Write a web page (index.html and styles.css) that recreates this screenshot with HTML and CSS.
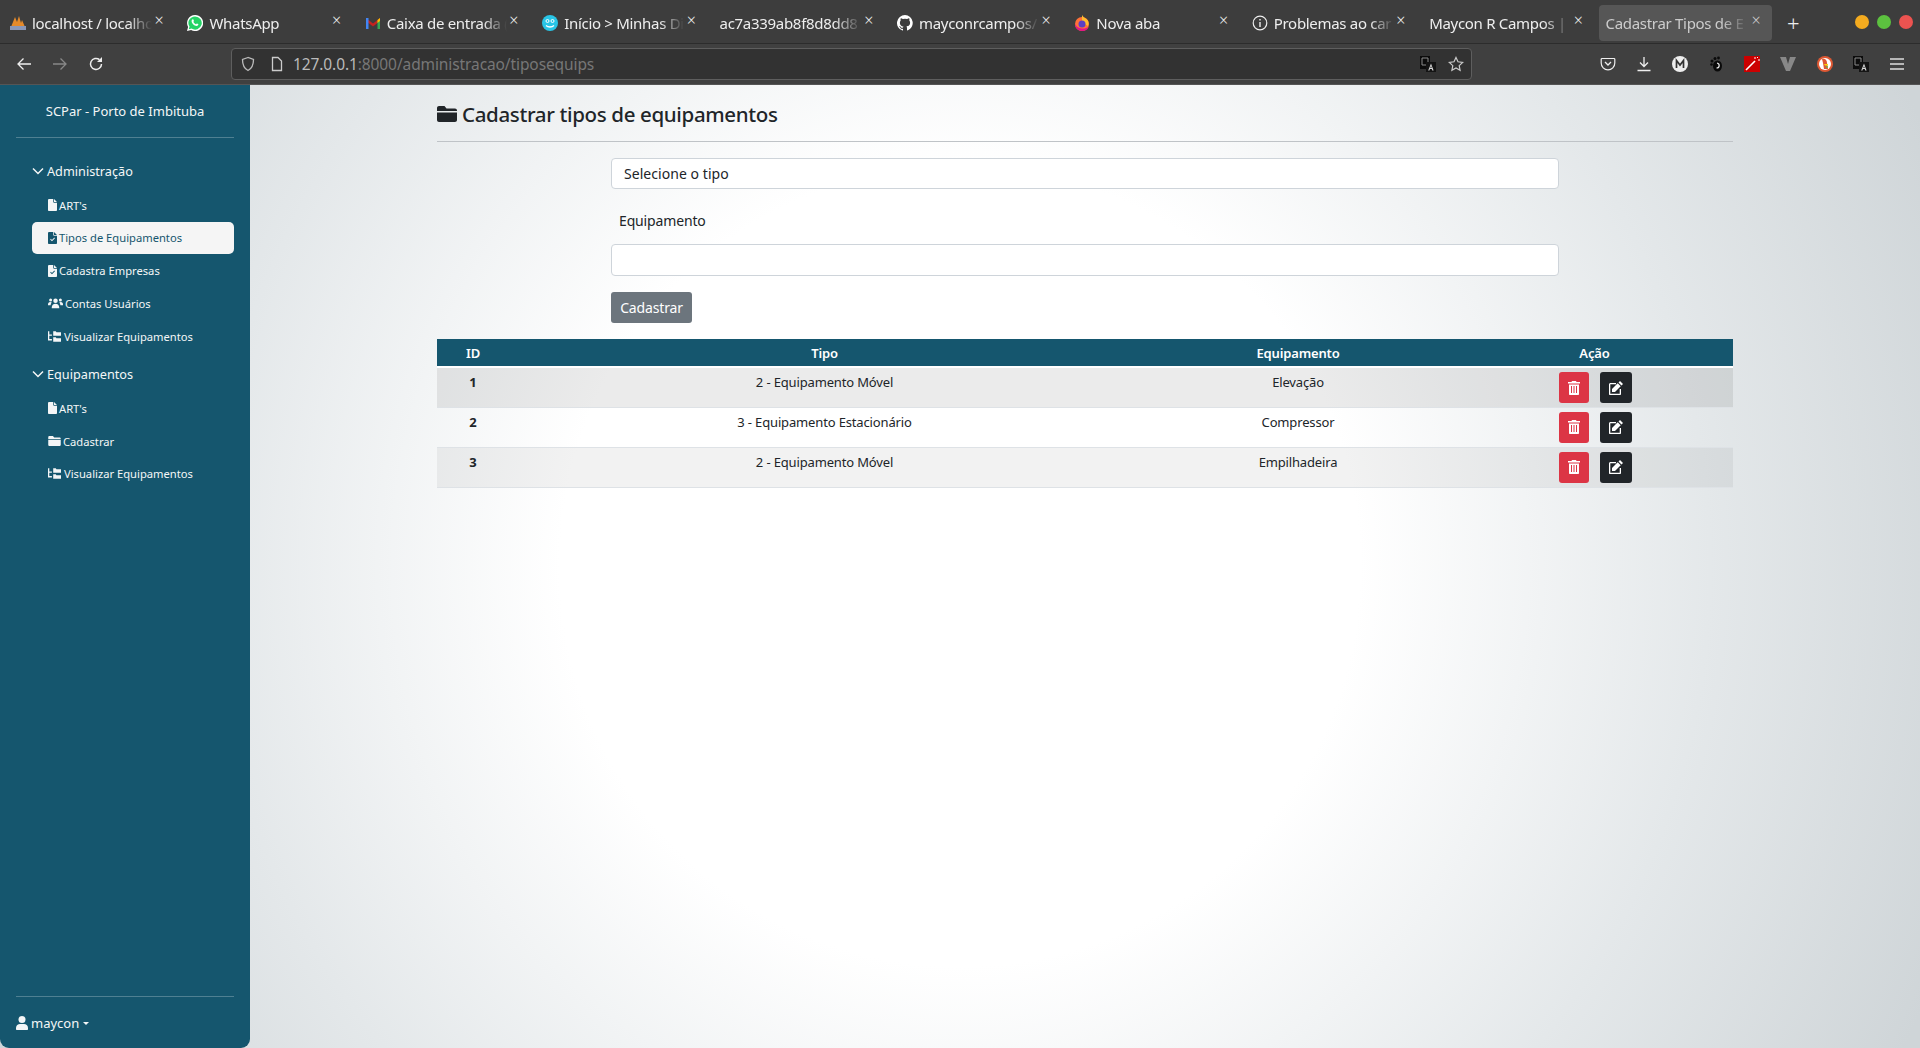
FILE: index.html
```html
<!DOCTYPE html>
<html lang="pt-BR">
<head>
	<meta charset="UTF-8">
	<meta name="viewport" content="width=device-width, initial-scale=1.0">
	<title>Cadastrar Tipos de Equipamentos</title>
	<link rel="stylesheet" href="styles.css">
</head>
<body>
	<svg class="sprite" aria-hidden="true">
		<symbol id="i-file" viewBox="0 0 12 16"><path d="M0 1.500C0 .7.7 0 1.500 0H7v4c0 .6.400 1 1 1h4v9.500c0 .8-.7 1.500-1.500 1.500h-9C.7 16 0 15.300 0 14.500zM8 0l4 4H8z"/></symbol>
		<symbol id="i-file-check" viewBox="0 0 12 16"><path fill-rule="evenodd" d="M0 1.500C0 .7.7 0 1.500 0H7v4c0 .6.400 1 1 1h4v9.500c0 .8-.7 1.500-1.500 1.500h-9C.7 16 0 15.300 0 14.500zM8 0l4 4H8zM9.300 8.300 8.400 7.400 5.300 10.600 3.800 9.100l-.9.9 2.400 2.400z"/></symbol>
		<symbol id="i-folder" viewBox="0 0 20 16"><path d="M2 0h5.500l2 2.500H18c1.100 0 2 .9 2 2V5H0V2C0 .9.900 0 2 0zM0 6.500h20V14c0 1.100-.9 2-2 2H2c-1.100 0-2-.9-2-2z"/></symbol>
		<symbol id="i-users" viewBox="0 0 20 16"><circle cx="10" cy="5" r="3"/><circle cx="3.500" cy="4" r="2"/><circle cx="16.500" cy="4" r="2"/><path d="M5 14c0-3 2-5 5-5s5 2 5 5v1H5zM0 10c0-2 1-3.500 3-3.500 1 0 1.500.3 2 .8C4 8.300 3.500 9.500 3.500 11H0zM20 10c0-2-1-3.500-3-3.500-1 0-1.500.3-2 .8 1 1 1.500 2.200 1.500 3.700H20z"/></symbol>
		<symbol id="i-tree" viewBox="0 0 20 16"><path d="M0 0h2v5h4v2H2v5h4v2H0z"/><path d="M8 0h4l1 1.500h7V7H8zM8 9h4l1 1.500h7V16H8z"/></symbol>
		<symbol id="i-chevron" viewBox="0 0 12 8"><path d="M1 1.500l5 5 5-5" fill="none" stroke="currentColor" stroke-width="1.500"/></symbol>
		<symbol id="i-user" viewBox="0 0 12 14"><circle cx="6" cy="3.500" r="3.500"/><path d="M0 12c0-2.500 2-4 4-4h4c2 0 4 1.500 4 4v1c0 .6-.4 1-1 1H1c-.6 0-1-.4-1-1z"/></symbol>
		<symbol id="i-trash" viewBox="0 0 12 14"><path fill-rule="evenodd" d="M4 0h4l.5 1H12v1.500H0V1h3.500zM1 3.500h10V13c0 .6-.4 1-1 1H2c-.6 0-1-.4-1-1zM3 5v7h1V5zm2.500 0v7h1V5zM8 5v7h1V5z"/></symbol>
		<symbol id="i-edit" viewBox="0 0 14 14"><path d="M11 0l3 3-1.500 1.500-3-3zM8.700 2.300l3 3L6 11H3V8z"/><path d="M1.500 2H7v1.300H1.300v9.400h9.400V8H12v5c0 .6-.5 1-1 1H1c-.6 0-1-.4-1-1V3.500C0 2.700.7 2 1.500 2z"/></symbol>
		<symbol id="i-translate" viewBox="0 0 16 16"><path fill="#0c0c0c" d="M0 0h10v13H0z"/><path d="M2 2h6v7H2z" fill="none" stroke="#8a8a8a"/><path fill="#141414" d="M6 6h10v10H6z"/><path fill="#d8d8d8" d="M11 7.500l2.600 7h-1.300l-.5-1.500H9.900l-.5 1.500H8.200zm0 2.600-.7 2h1.400z"/></symbol>
	</svg>

	<div class="browser-tabs">
		<div class="tab">
			<svg class="favicon" viewBox="0 0 16 16"><path fill="#e58a2b" d="M1 12 5 2l2 5 2-6 2 7 1-3 3 7z"/><path fill="#8a97b8" d="M0 11h16v4H0z"/></svg>
			<span class="tab-label">localhost / localho</span><span class="tab-close">×</span>
		</div>
		<div class="tab">
			<svg class="favicon" viewBox="0 0 16 16"><path fill="#fff" d="M8 0a8 8 0 0 0-6.900 12L0 16l4.100-1.100A8 8 0 1 0 8 0z"/><path fill="#25d366" d="M8 1.400a6.600 6.600 0 0 0-5.500 10.200l-.7 2.600 2.700-.7A6.600 6.600 0 1 0 8 1.400z"/><path fill="#fff" d="M5.800 4.300c.5 0 .6.200 1.100 1.500.1.400-.5 1-.5 1.200.5 1 1.300 1.700 2.400 2.200.3 0 .7-.8 1-.8l1.500.7c.2.900-.5 1.800-1.700 1.800-2.500-.2-5-2.800-5-4.700 0-1 .6-1.900 1.200-1.900z"/></svg>
			<span class="tab-label">WhatsApp</span><span class="tab-close">×</span>
		</div>
		<div class="tab">
			<svg class="favicon" viewBox="0 0 16 16"><path fill="#c5221f" d="M1 3l7 5.500L15 3v3L8 11.500 1 6z"/><path fill="#4285f4" d="M1 3h2.500v11H1z"/><path fill="#34a853" d="M12.500 6H15v8h-2.500z"/><path fill="#fbbc04" d="M12.500 5 15 3v3l-2.500 2z"/></svg>
			<span class="tab-label">Caixa de entrada (</span><span class="tab-close">×</span>
		</div>
		<div class="tab">
			<svg class="favicon" viewBox="0 0 16 16"><circle cx="8" cy="8" r="8" fill="#29c5e6"/><circle cx="5.500" cy="6" r="1.500" fill="none" stroke="#fff"/><circle cx="10.500" cy="6" r="1.500" fill="none" stroke="#fff"/><path d="M4 10.500c2 2 6 2 8 0" fill="none" stroke="#fff" stroke-width="1.300"/></svg>
			<span class="tab-label">Início &gt; Minhas Di</span><span class="tab-close">×</span>
		</div>
		<div class="tab">
			<span class="tab-label">ac7a339ab8f8d8dd8</span><span class="tab-close">×</span>
		</div>
		<div class="tab">
			<svg class="favicon" viewBox="0 0 16 16"><path fill="#fff" d="M8 0a8 8 0 0 0-2.500 15.600c.4.100.5-.2.500-.4v-1.400c-2.200.5-2.700-1-2.700-1-.4-.9-.9-1.200-.9-1.200-.7-.5.100-.5.100-.5.800.1 1.200.8 1.200.8.700 1.200 1.900.9 2.300.7.100-.5.300-.9.500-1.100-1.800-.2-3.600-.9-3.600-4 0-.9.300-1.600.8-2.100-.1-.2-.4-1 .1-2.100 0 0 .7-.2 2.200.8a7.500 7.500 0 0 1 4 0c1.500-1 2.200-.8 2.200-.8.400 1.100.2 1.900.1 2.100.5.600.8 1.300.8 2.100 0 3.100-1.900 3.700-3.700 3.900.3.300.6.800.6 1.500v2.200c0 .2.100.5.500.4A8 8 0 0 0 8 0z"/></svg>
			<span class="tab-label">mayconrcampos/</span><span class="tab-close">×</span>
		</div>
		<div class="tab">
			<svg class="favicon" viewBox="0 0 16 16"><circle cx="8" cy="9" r="7" fill="#ff7139"/><path fill="#ffbd2e" d="M8 0c1 2 3 3 4.500 4C15 6 15 9 14 11L8 7z"/><circle cx="8" cy="9" r="3.500" fill="#5b3fc4"/><path fill="#e31587" d="M1 9c0 4 3 7 7 7s6-2 6.500-4C12 14 4 15 1 9z"/></svg>
			<span class="tab-label">Nova aba</span><span class="tab-close">×</span>
		</div>
		<div class="tab">
			<svg class="favicon" viewBox="0 0 16 16"><circle cx="8" cy="8" r="6.800" fill="none" stroke="#eee" stroke-width="1.200"/><path fill="#eee" d="M7.300 7h1.400v5H7.300zM7.300 4h1.400v1.500H7.300z"/></svg>
			<span class="tab-label">Problemas ao car</span><span class="tab-close">×</span>
		</div>
		<div class="tab">
			<span class="tab-label">Maycon R Campos | D</span><span class="tab-close">×</span>
		</div>
		<div class="tab tab-active">
			<span class="tab-label">Cadastrar Tipos de E</span><span class="tab-close">×</span>
		</div>
		<div class="tab-new">+</div>
		<div class="window-controls">
			<span class="dot dot-min"></span>
			<span class="dot dot-max"></span>
			<span class="dot dot-close"></span>
		</div>
	</div>

	<div class="browser-toolbar">
		<div class="nav-buttons">
			<svg class="tool-icon" viewBox="0 0 16 16"><path d="M15 8H2M7.500 2.500 2 8l5.500 5.500" fill="none" stroke="#eee" stroke-width="1.300"/></svg>
			<svg class="tool-icon" viewBox="0 0 16 16"><path d="M1 8h13M8.500 2.500 14 8l-5.500 5.500" fill="none" stroke="#888" stroke-width="1.300"/></svg>
			<svg class="tool-icon" viewBox="0 0 16 16"><path d="M13.500 8A5.500 5.500 0 1 1 11.500 3.700" fill="none" stroke="#eee" stroke-width="1.500"/><path fill="#eee" d="M14 1v5H9z"/></svg>
		</div>
		<div class="urlbar">
			<svg class="url-icon" viewBox="0 0 16 16"><path d="M8 1.500 2.500 3.500c0 5 1.500 9 5.500 11 4-2 5.500-6 5.500-11z" fill="none" stroke="#bbb" stroke-width="1.300"/></svg>
			<svg class="url-icon" viewBox="0 0 16 16"><path d="M3.500 1.500H9L12.500 5v9.500h-9z" fill="none" stroke="#ccc" stroke-width="1.300"/></svg>
			<span class="url-text">127.0.0.1<span class="url-dim">:8000/administracao/tiposequips</span></span>
			<svg class="url-icon url-translate"><use href="#i-translate"/></svg>
			<svg class="url-icon" viewBox="0 0 16 16"><path d="M8 1.500l2 4.300 4.700.6-3.500 3.200.9 4.700L8 12l-4.100 2.300.9-4.700L1.300 6.400 6 5.800z" fill="none" stroke="#ccc" stroke-width="1.200"/></svg>
		</div>
		<div class="toolbar-icons">
			<svg class="tool-icon" viewBox="0 0 16 16"><path d="M2 2.500h12c.5 0 .8.300.8.800V7A6.800 6.800 0 0 1 1.200 7V3.300c0-.5.300-.8.800-.8z" fill="none" stroke="#eee" stroke-width="1.200"/><path d="M5 6l3 3 3-3" fill="none" stroke="#eee" stroke-width="1.300"/></svg>
			<svg class="tool-icon" viewBox="0 0 16 16"><path d="M8 1v9M4 6.500 8 10.500l4-4M1.500 14.500h13" fill="none" stroke="#eee" stroke-width="1.300"/></svg>
			<svg class="tool-icon" viewBox="0 0 16 16"><circle cx="8" cy="8" r="8" fill="#eee"/><path d="M4.500 12V4.500L8 9l3.500-4.500V12" fill="none" stroke="#333" stroke-width="1.700"/></svg>
			<svg class="tool-icon" viewBox="0 0 16 16"><ellipse cx="9.500" cy="10" rx="4.500" ry="5.500" fill="#0a0a0a"/><circle cx="4" cy="5" r="1.500" fill="#0a0a0a"/><circle cx="7" cy="2.500" r="1.500" fill="#0a0a0a"/><circle cx="10.500" cy="2" r="1.400" fill="#0a0a0a"/><circle cx="3.500" cy="8.500" r="1.300" fill="#0a0a0a"/><path d="M9 7c3 .5 3 5-.5 5" fill="none" stroke="#eee" stroke-width="1.200"/></svg>
			<svg class="tool-icon" viewBox="0 0 16 16"><path fill="#c00" d="M0 0h16v16H0z"/><path d="M2 14 11 5" stroke="#fff" stroke-width="1.600"/><path d="M11 1v2M14 4h2M13 2l1-1" stroke="#fff"/></svg>
			<svg class="tool-icon" viewBox="0 0 16 16"><path fill="#888" d="M0 1h6l2 7 2-7h6L10 15H6z"/></svg>
			<svg class="tool-icon" viewBox="0 0 16 16"><circle cx="8" cy="8" r="8" fill="#de5833"/><circle cx="8" cy="8" r="6" fill="#fff"/><path fill="#de5833" d="M5 3c3-1 5 1 5 4l1 6H7L6 7z"/><path fill="#65bc46" d="M8 11l3-1v2z"/><path fill="#fdd20a" d="M7 8h4v1.500H8z"/></svg>
			<svg class="tool-icon"><use href="#i-translate"/></svg>
			<svg class="tool-icon" viewBox="0 0 16 16"><path d="M1 3h14M1 8h14M1 13h14" stroke="#ddd" stroke-width="1.300"/></svg>
		</div>
	</div>

	<div class="app">
		<aside class="sidebar">
			<div class="brand">SCPar - Porto de Imbituba</div>
			<hr class="side-rule">

			<div class="nav-group">
				<div class="group-title"><svg class="chevron"><use href="#i-chevron"/></svg>Administração</div>
				<a class="nav-item"><svg class="ico ico-file"><use href="#i-file"/></svg>ART's</a>
				<a class="nav-item active"><svg class="ico ico-file"><use href="#i-file-check"/></svg>Tipos de Equipamentos</a>
				<a class="nav-item"><svg class="ico ico-file"><use href="#i-file-check"/></svg>Cadastra Empresas</a>
				<a class="nav-item"><svg class="ico ico-users"><use href="#i-users"/></svg>Contas Usuários</a>
				<a class="nav-item"><svg class="ico ico-wide"><use href="#i-tree"/></svg>Visualizar Equipamentos</a>
			</div>

			<div class="nav-group">
				<div class="group-title"><svg class="chevron"><use href="#i-chevron"/></svg>Equipamentos</div>
				<a class="nav-item"><svg class="ico ico-file"><use href="#i-file"/></svg>ART's</a>
				<a class="nav-item"><svg class="ico ico-folder"><use href="#i-folder"/></svg>Cadastrar</a>
				<a class="nav-item"><svg class="ico ico-wide"><use href="#i-tree"/></svg>Visualizar Equipamentos</a>
			</div>

			<div class="side-footer">
				<hr class="side-rule">
				<div class="user"><svg class="ico-user"><use href="#i-user"/></svg>maycon<span class="caret"></span></div>
			</div>
		</aside>

		<main class="content">
			<h1 class="page-title"><svg class="title-icon"><use href="#i-folder"/></svg>Cadastrar tipos de equipamentos</h1>

			<form class="type-form">
				<select class="field field-select">
					<option>Selecione o tipo</option>
				</select>
				<label class="field-label" for="equipamento">Equipamento</label>
				<input class="field field-input" id="equipamento" type="text">
				<button class="btn-submit" type="button">Cadastrar</button>
			</form>

			<table class="types-table">
				<thead>
					<tr>
						<th class="col-id">ID</th>
						<th class="col-type">Tipo</th>
						<th class="col-equip">Equipamento</th>
						<th class="col-action">Ação</th>
					</tr>
				</thead>
				<tbody>
					<tr>
						<td class="cell-id">1</td>
						<td>2 - Equipamento Móvel</td>
						<td>Elevação</td>
						<td><div class="actions"><button class="btn-action btn-delete" type="button"><svg class="btn-ico"><use href="#i-trash"/></svg></button><button class="btn-action btn-edit" type="button"><svg class="btn-ico"><use href="#i-edit"/></svg></button></div></td>
					</tr>
					<tr>
						<td class="cell-id">2</td>
						<td>3 - Equipamento Estacionário</td>
						<td>Compressor</td>
						<td><div class="actions"><button class="btn-action btn-delete" type="button"><svg class="btn-ico"><use href="#i-trash"/></svg></button><button class="btn-action btn-edit" type="button"><svg class="btn-ico"><use href="#i-edit"/></svg></button></div></td>
					</tr>
					<tr>
						<td class="cell-id">3</td>
						<td>2 - Equipamento Móvel</td>
						<td>Empilhadeira</td>
						<td><div class="actions"><button class="btn-action btn-delete" type="button"><svg class="btn-ico"><use href="#i-trash"/></svg></button><button class="btn-action btn-edit" type="button"><svg class="btn-ico"><use href="#i-edit"/></svg></button></div></td>
					</tr>
				</tbody>
			</table>
		</main>
	</div>
</body>
</html>
```

FILE: styles.css
```css
* {
	box-sizing: border-box;
}
html, body {
	height: 100%;
}
body {
	margin: 0;
	display: flex;
	flex-direction: column;
	overflow: hidden;
	font-family: "Noto Sans", sans-serif;
	color: #212529;
	background-color: #3f3f3f;
}
.sprite {
	display: none;
}

/* browser chrome */
.browser-tabs {
	display: flex;
	align-items: center;
	height: 44px;
	padding-top: 2px;
	background-color: #3d3d3d;
	border-bottom: 1px solid #2c2c2c;
	color: #eee;
	font-size: 15px;
	letter-spacing: -0.3px;
}
.tab {
	display: flex;
	align-items: center;
	flex: 0 0 177.4px;
	min-width: 0;
	height: 36px;
	padding: 0 11.4px 0 10px;
}
.tab-active {
	margin: 0 2px 0 2px;
	flex-basis: 173px;
	padding: 0 8.600px 0 7px;
	background-color: #565656;
	border-radius: 4px;
	color: #ccc;
}
.favicon {
	flex: none;
	width: 16px;
	height: 16px;
	margin-right: 6px;
}
.tab-label {
	flex: 1;
	min-width: 0;
	overflow: hidden;
	white-space: nowrap;
	-webkit-mask-image: linear-gradient(to right, #000 80%, transparent 100%);
	mask-image: linear-gradient(to right, #000 80%, transparent 100%);
}
.tab-close {
	flex: none;
	width: 14px;
	text-align: center;
	font-size: 16px;
	font-weight: 300;
	line-height: 16px;
	margin-top: -6px;
}
.tab-new {
	margin-left: 9.500px;
	font-size: 22px;
	font-weight: 300;
	line-height: 22px;
	width: 20px;
	text-align: center;
}
.window-controls {
	display: flex;
	gap: 8px;
	margin-left: auto;
	margin-right: 7px;
	margin-top: -2px;
}
.dot {
	width: 14px;
	height: 14px;
	border-radius: 50%;
}
.dot-min {
	background-color: #f4ab1f;
}
.dot-max {
	background-color: #5cc13f;
}
.dot-close {
	background-color: #ec5350;
}
.browser-toolbar {
	display: flex;
	align-items: center;
	height: 41px;
	background-color: #404040;
	border-bottom: 1px solid #555;
}
.nav-buttons {
	display: flex;
	gap: 20px;
	padding-left: 16px;
	width: 231px;
}
.tool-icon {
	flex: none;
	width: 16px;
	height: 16px;
}
.urlbar {
	display: flex;
	align-items: center;
	width: 1241px;
	height: 32px;
	padding: 0 7px 0 8px;
	background-color: #323232;
	border: 1px solid #5e5e5e;
	border-radius: 4px;
	font-size: 15.500px;
	letter-spacing: -0.1px;
}
.url-icon {
	flex: none;
	width: 16px;
	height: 16px;
	margin-right: 13px;
}
.url-text {
	flex: 1;
	margin-left: -5px;
	color: #bbb;
}
.url-dim {
	color: #777;
}
.url-translate {
	margin-right: 12px;
}
.urlbar .url-icon:last-child {
	margin-right: 0;
}
.toolbar-icons {
	display: flex;
	gap: 20.100px;
	padding-left: 128px;
}

/* app */
.app {
	flex: 1;
	display: flex;
	min-height: 0;
	background: radial-gradient(circle at 50% 50%, #fff 400px, #e4e8ea 750px, #cfd5d8 1060px);
}
.sidebar {
	display: flex;
	flex-direction: column;
	flex: 0 0 250px;
	padding: 0 16px;
	background-color: #15566e;
	border-radius: 0 0 9px 9px;
	color: #f4f6f7;
}
.brand {
	height: 52px;
	line-height: 52px;
	text-align: center;
	font-size: 13px;
}
.side-rule {
	margin: 0;
	border: 0;
	border-top: 1px solid rgba(255, 255, 255, 0.25);
}
.nav-group {
	margin-top: 21px;
	margin-bottom: -11.500px;
}
.group-title {
	display: flex;
	align-items: center;
	height: 24px;
	margin-bottom: 6px;
	padding-left: 16px;
	font-size: 12.700px;
}
.chevron {
	width: 12px;
	height: 8px;
	margin-right: 3px;
}
.nav-item {
	display: flex;
	align-items: center;
	height: 32px;
	margin-bottom: 0.750px;
	margin-left: 16px;
	padding-left: 16px;
	border-radius: 5px;
	font-size: 11.200px;
}
.nav-item.active {
	background-color: #f5f5f5;
	color: #15566e;
}
.ico {
	flex: none;
	fill: currentColor;
	margin-right: 2px;
}
.ico-file {
	width: 9px;
	height: 12px;
}
.ico-wide {
	width: 13px;
	height: 11px;
	margin-right: 3px;
}
.ico-users {
	width: 15px;
	height: 12px;
}
.ico-folder {
	width: 13px;
	height: 10px;
}
.side-footer {
	margin-top: auto;
	padding-bottom: 13px;
}
.user {
	display: flex;
	align-items: center;
	height: 24px;
	margin-top: 14px;
	font-size: 13px;
}
.ico-user {
	width: 12px;
	height: 14px;
	margin-right: 3px;
	fill: currentColor;
}
.caret {
	margin-left: 4px;
	border-top: 3px solid currentColor;
	border-left: 3px solid transparent;
	border-right: 3px solid transparent;
}

/* main area */
.content {
	flex: 1;
	min-width: 0;
	padding: 0 187px;
}
.page-title {
	display: flex;
	align-items: center;
	height: 57px;
	margin: 0;
	padding-top: 2px;
	border-bottom: 1px solid #bfc3c7;
	font-size: 20.500px;
	font-weight: 500;
	letter-spacing: -0.35px;
}
.title-icon {
	width: 20px;
	height: 16px;
	margin-right: 5px;
	fill: currentColor;
}
.type-form {
	width: 948px;
	margin: 16px auto 16px auto;
	font-size: 14px;
	letter-spacing: -0.15px;
}
.field {
	display: block;
	width: 100%;
	background-color: #fff;
	border: 1px solid #ced4da;
	border-radius: 4px;
	font: inherit;
	letter-spacing: inherit;
	color: #212529;
}
.field-select {
	height: 31px;
	padding-left: 12px;
	appearance: none;
	letter-spacing: 0.05px;
}
.field-label {
	display: block;
	height: 55px;
	line-height: 64px;
	padding-left: 8px;
}
.field-input {
	height: 32px;
}
.btn-submit {
	display: block;
	width: 81px;
	height: 31px;
	margin-top: 16px;
	padding: 0;
	background-color: #6c757d;
	border: 0;
	border-radius: 3px;
	color: #fff;
	font: inherit;
	letter-spacing: inherit;
}
.types-table {
	width: 100%;
	table-layout: fixed;
	border-collapse: collapse;
	font-size: 13px;
	letter-spacing: -0.15px;
}
.types-table th {
	height: 28px;
	padding: 0;
	background-color: #15566e;
	border-bottom: 2px solid #fff;
	color: #fff;
	font-weight: 600;
	text-align: center;
}
.col-id {
	width: 72px;
}
.col-type {
	width: 631px;
}
.col-equip {
	width: 316px;
}
.types-table td {
	height: 40px;
	padding: 4px 0 0 0;
	border-bottom: 1px solid #dee2e6;
	text-align: center;
	vertical-align: top;
	line-height: 20px;
}
.types-table tbody tr:nth-child(1) {
	background-color: rgba(0, 0, 0, 0.08);
}
.types-table tbody tr:nth-child(3) {
	background-color: rgba(0, 0, 0, 0.05);
}
.cell-id {
	font-weight: 700;
}
.actions {
	display: flex;
	justify-content: center;
	gap: 11px;
	padding-left: 2px;
}
.btn-action {
	display: flex;
	align-items: center;
	justify-content: center;
	height: 31px;
	padding: 0;
	border: 0;
	border-radius: 3px;
	color: #fff;
}
.btn-delete {
	width: 30px;
	background-color: #dc3545;
}
.btn-edit {
	width: 32px;
	background-color: #212529;
}
.btn-ico {
	width: 14px;
	height: 14px;
	fill: currentColor;
}
```
